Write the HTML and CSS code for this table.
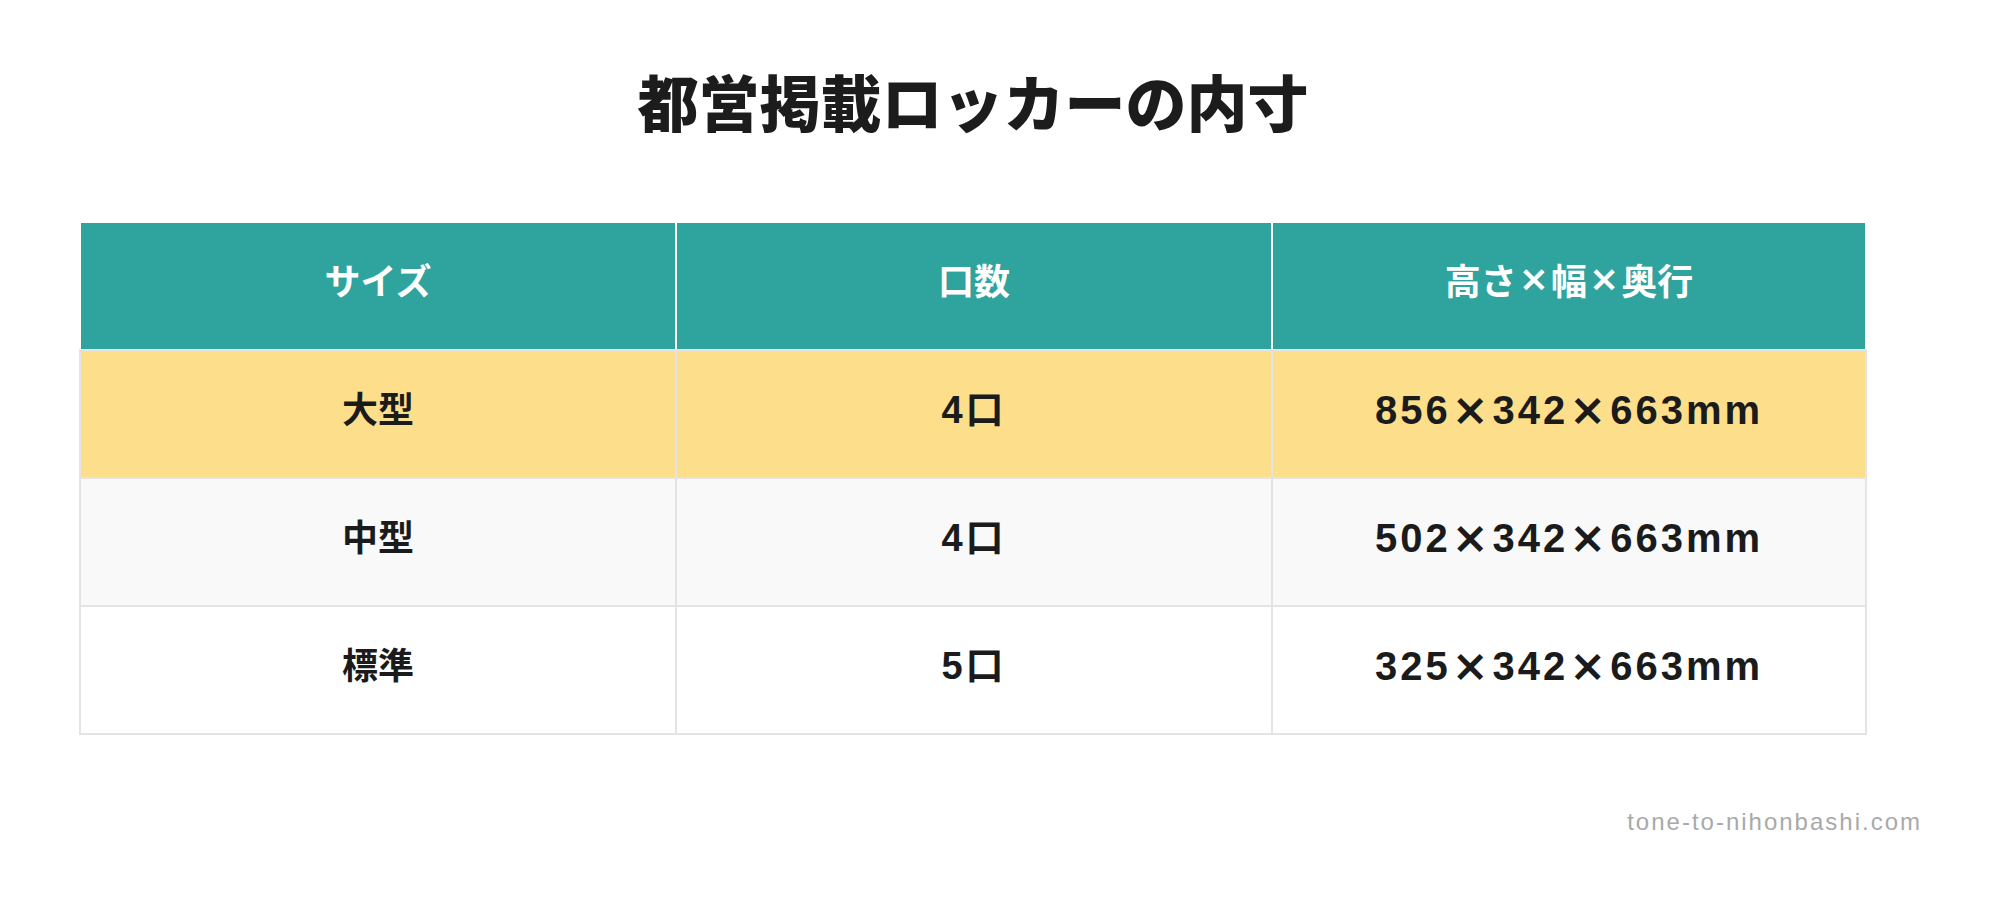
FILE: index.html
```html
<!DOCTYPE html>
<html lang="ja">
<head>
<meta charset="utf-8">
<title>都営掲載ロッカーの内寸</title>
<link rel="stylesheet" href="styles.css">
</head>
<body>
<main class="page">
  <h1 class="title">都営掲載ロッカーの内寸</h1>
  <div class="table">
    <div class="hcell">サイズ</div>
    <div class="hcell">口数</div>
    <div class="hcell hcell-last">高さ<span class="x">×</span>幅<span class="x">×</span>奥行</div>

    <div class="cell row-large">大型</div>
    <div class="cell row-large num">4口</div>
    <div class="cell row-large num dims cell-last">856<span class="x">×</span>342<span class="x">×</span>663mm</div>

    <div class="cell row-mid">中型</div>
    <div class="cell row-mid num">4口</div>
    <div class="cell row-mid num dims cell-last">502<span class="x">×</span>342<span class="x">×</span>663mm</div>

    <div class="cell row-std row-end">標準</div>
    <div class="cell row-std row-end num">5口</div>
    <div class="cell row-std row-end num dims cell-last">325<span class="x">×</span>342<span class="x">×</span>663mm</div>
  </div>
  <footer class="footer">tone-to-nihonbashi.com</footer>
</main>
</body>
</html>
```
FILE: styles.css
```css
html, body {
  margin: 0;
  padding: 0;
  background: #ffffff;
}

body {
  font-family: "Noto Sans CJK JP", "Noto Sans", sans-serif;
  color: #1b1b1b;
}

.page {
  width: 2003px;
  display: flex;
  flex-direction: column;
}

.title {
  margin: 70px 0 0 79px;
  width: 1788px;
  text-align: center;
  font-size: 61px;
  line-height: 61px;
  font-weight: 900;
  color: #1c1c1c;
}

.table {
  margin: 90px 0 0 79px;
  width: 1788px;
  display: grid;
  grid-template-columns: repeat(3, 1fr);
}

.hcell {
  box-sizing: border-box;
  height: 128px;
  border-top: 2px solid #ffffff;
  border-left: 2px solid #ffffff;
  background: #2fa39d;
  color: #ffffff;
  font-size: 36px;
  font-weight: 700;
  display: flex;
  align-items: center;
  justify-content: center;
  padding-bottom: 14px;
}

.hcell-last {
  border-right: 2px solid #ffffff;
}

.cell {
  box-sizing: border-box;
  height: 128px;
  border-top: 2px solid #e4e4e4;
  border-left: 2px solid #e4e4e4;
  font-size: 36px;
  font-weight: 700;
  display: flex;
  align-items: center;
  justify-content: center;
  padding-bottom: 15px;
}

.num {
  font-family: "Liberation Sans", "Noto Sans CJK JP", sans-serif;
  font-size: 38px;
  letter-spacing: 3px;
}

.dims {
  font-size: 40px;
  line-height: 1;
  padding-bottom: 8px;
}

.x {
  font-family: "DejaVu Sans", sans-serif;
  font-weight: 700;
  line-height: 1;
  margin: 0 1px;
}

.dims .x {
  font-size: 44px;
}

.hcell .x {
  font-size: 36px;
  margin: 0 2px;
}

.cell-last {
  border-right: 2px solid #e4e4e4;
}

.row-end {
  height: 130px;
  border-bottom: 2px solid #e4e4e4;
}

.row-large {
  background: #fddf8b;
}

.row-mid {
  background: #f9f9f9;
}

.row-std {
  background: #ffffff;
}

.footer {
  align-self: flex-end;
  margin: 75px 81px 0 0;
  font-family: "Liberation Sans", Arial, sans-serif;
  font-size: 24px;
  line-height: 24px;
  letter-spacing: 2px;
  color: #a9a9a9;
}
```
